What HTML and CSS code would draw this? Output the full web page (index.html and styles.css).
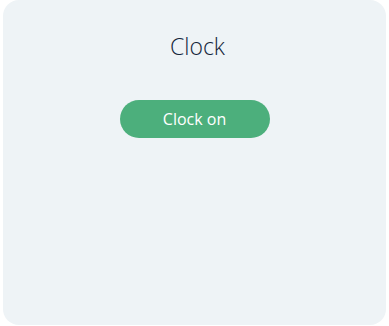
FILE: index.html
```html
<!DOCTYPE html>
<html lang="en">
<head>
<meta charset="utf-8">
<title>Clock</title>
<link rel="stylesheet" href="styles.css">
</head>
<body>
<div class="card">
  <h1 class="title">Clock</h1>
  <button class="btn" type="button">Clock on</button>
</div>
</body>
</html>
```
FILE: styles.css
```css
html, body {
  margin: 0;
  padding: 0;
  background: #ffffff;
}
body {
  font-family: "Open Sans", "Noto Sans", sans-serif;
}
.card {
  margin: 0 3px;
  height: 325px;
  box-sizing: border-box;
  background: #eef3f6;
  border-radius: 16px;
  display: flex;
  flex-direction: column;
  align-items: center;
  padding-top: 31px;
}
.title {
  margin: 0;
  padding-left: 6px;
  font-size: 23px;
  line-height: 30px;
  font-weight: 300;
  color: #14263b;
}
.btn {
  margin-top: 39px;
  width: 150px;
  height: 38px;
  border: none;
  border-radius: 19px;
  background: #4caf7c;
  color: #ffffff;
  font-family: "Open Sans", "Noto Sans", sans-serif;
  font-size: 16px;
  font-weight: 400;
  padding: 0;
  cursor: pointer;
}
```
